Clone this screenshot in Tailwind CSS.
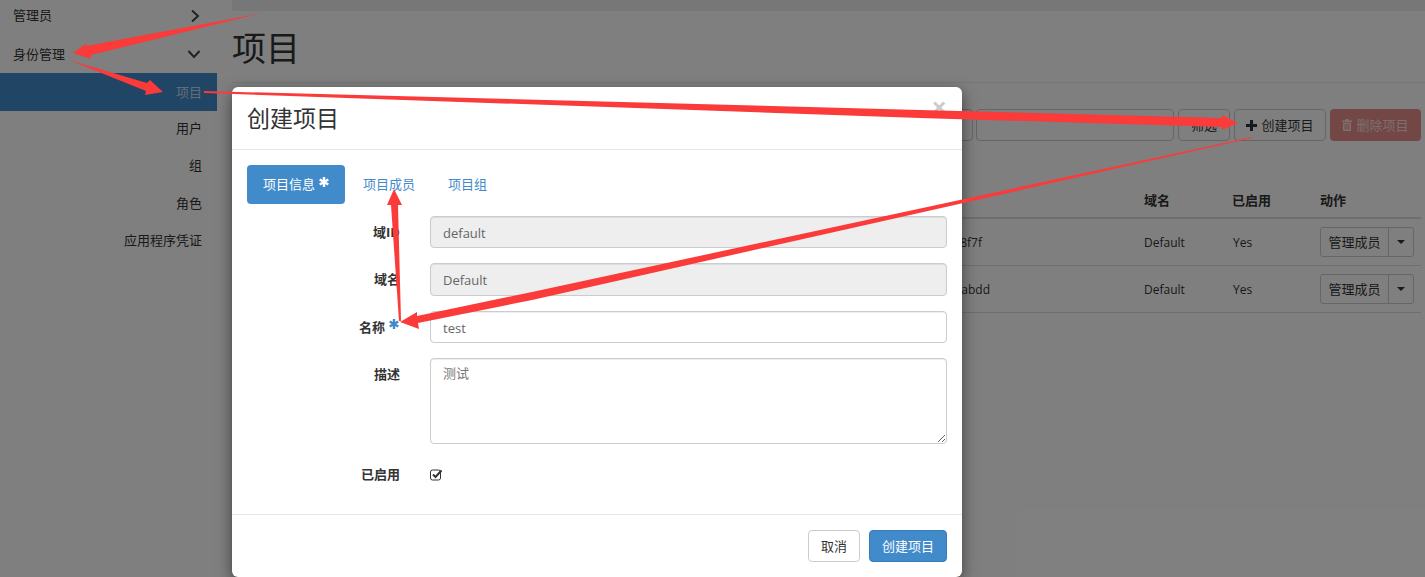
<!DOCTYPE html>
<html lang="zh">
<head>
<meta charset="utf-8">
<title>创建项目</title>
<script src="https://cdn.jsdelivr.net/npm/@tailwindcss/browser@4"></script>
</head>
<body class="m-0 overflow-hidden bg-white">
<div class="relative flex h-[577px] w-[1425px] overflow-hidden bg-white font-['Open_Sans','Noto_Sans_CJK_SC',sans-serif] text-[13px] leading-[18px] text-[#333]">

  <!-- sidebar -->
  <aside class="-mt-[4px] w-[217px] shrink-0">
    <div class="flex h-[39px] items-center justify-between pl-[13px] pr-[16px]"><span class="-mt-[2px]">管理员</span>
      <svg class="h-[14px] w-[12px]" viewBox="0 0 12 14" fill="none" stroke="#444" stroke-width="2"><path d="M3 1.5 9 7 3 12.5"/></svg></div>
    <div class="flex h-[38px] items-center justify-between pl-[13px] pr-[16px]"><span>身份管理</span>
      <svg class="h-[12px] w-[14px]" viewBox="0 0 14 12" fill="none" stroke="#444" stroke-width="2"><path d="M1.5 3 7 9 12.5 3"/></svg></div>
    <div class="flex h-[38px] items-center justify-end bg-[#428bca] pr-[15px] text-white/70">项目</div>
    <div class="flex h-[37px] items-center justify-end pb-[3px] pr-[15px]">用户</div>
    <div class="flex h-[37px] items-center justify-end pb-[3px] pr-[15px]">组</div>
    <div class="flex h-[37px] items-center justify-end pb-[2px] pr-[15px]">角色</div>
    <div class="flex h-[37px] items-center justify-end pb-[2px] pr-[15px]">应用程序凭证</div>
  </aside>

  <!-- main -->
  <main class="ml-[15px] flex-1">
    <div class="h-[11px] rounded-bl-[3px] bg-[#eeeeee]"></div>
    <h1 class="mt-[15px] h-[44px] text-[34px] font-normal leading-[44px] text-[#333]">项目</h1>
    <div class="mt-[12px] border-t border-[#eeeeee]"></div>
    <div class="mt-[26px] flex h-[32px] justify-end gap-[3px] pr-[4px]">
      <div class="h-[32px] w-[80px] rounded-[4px] border border-[#ccc]"></div>
      <div class="h-[32px] w-[198px] rounded-[4px] border border-[#ccc]"></div>
      <div class="ml-[1px] flex h-[32px] w-[52px] items-center justify-center rounded-[4px] border border-[#ccc]">筛选</div>
      <div class="ml-[1px] flex h-[32px] w-[92px] items-center justify-center gap-[4px] rounded-[4px] border border-[#ccc]">
        <svg class="h-[11px] w-[11px]" viewBox="0 0 11 11" fill="#333"><path d="M4 0h3v4h4v3H7v4H4V7H0V4h4z"/></svg>创建项目</div>
      <div class="ml-[1px] flex h-[32px] w-[91px] items-center justify-center gap-[4px] rounded-[4px] bg-[#e68f8d] text-white/70">
        <svg class="h-[12px] w-[10px]" viewBox="0 0 10 12" fill="#ffffff" fill-opacity=".7"><path d="M3.5 0h3l.5 1.5h3V3H0V1.500h3zM1 3.800h8V12H1zM2.600 5v5.500h1V5zm1.900 0v5.500h1V5zm1.900 0v5.500h1V5z" fill-rule="evenodd"/></svg>删除项目</div>
    </div>
    <div class="mr-[4px] mt-[50px] grid h-[28px] grid-cols-[912px_88px_88px_1fr] items-start border-b-2 border-[#ddd] font-bold">
      <span></span><span>域名</span><span>已启用</span><span>动作</span>
    </div>
    <div class="mr-[4px] grid h-[47px] grid-cols-[912px_88px_88px_1fr] items-center border-b border-[#ddd] text-[12px]">
      <span class="pr-[162px] pt-[2px] text-right">0c4e8f7f</span><span class="pt-[2px]">Default</span><span class="pl-[1px] pt-[2px]">Yes</span>
      <div class="flex h-[30px] w-[94px] rounded-[3px] border border-[#ccc] text-[13px]">
        <span class="flex w-[68px] items-center justify-center border-r border-[#ccc]">管理成员</span>
        <span class="flex flex-1 items-center justify-center"><span class="h-0 w-0 border-x-[4px] border-t-[4px] border-x-transparent border-t-[#333]"></span></span>
      </div>
    </div>
    <div class="mr-[4px] grid h-[47px] grid-cols-[912px_88px_88px_1fr] items-center border-b border-[#ddd] text-[12px]">
      <span class="pr-[154px] pt-[2px] text-right">7d2abdd</span><span class="pt-[2px]">Default</span><span class="pl-[1px] pt-[2px]">Yes</span>
      <div class="flex h-[30px] w-[94px] rounded-[3px] border border-[#ccc] text-[13px]">
        <span class="flex w-[68px] items-center justify-center border-r border-[#ccc]">管理成员</span>
        <span class="flex flex-1 items-center justify-center"><span class="h-0 w-0 border-x-[4px] border-t-[4px] border-x-transparent border-t-[#333]"></span></span>
      </div>
    </div>
  </main>

  <!-- backdrop -->
  <div class="absolute inset-0 bg-black/50"></div>

  <!-- modal -->
  <section class="absolute left-[232px] top-[87px] h-[490px] w-[730px] rounded-[6px] bg-white shadow-[0_5px_15px_rgba(0,0,0,0.5)]">
    <header class="relative h-[63px] border-b border-[#e5e5e5] pl-[15px] pt-[15px]">
      <h2 class="text-[23px] font-normal leading-[33px] text-[#333]">创建项目</h2>
      <span class="absolute right-[15px] top-[6px] text-[27px] font-bold leading-[27px] text-[#cccccc]">×</span>
    </header>
    <nav class="flex pl-[15px] pt-[15px]">
      <div class="flex h-[39px] w-[98px] items-center justify-center gap-[4px] rounded-[4px] bg-[#428bca] pb-[2px] text-white">项目信息
        <svg class="mb-[4px] h-[10px] w-[10px]" viewBox="0 0 10 10" stroke="#fff" stroke-width="2.400"><path d="M5 0v10M.7 2.500l8.600 5M.7 7.500l8.600-5"/></svg></div>
      <div class="ml-[18px] flex h-[39px] items-center pb-[2px] text-[#428bca]">项目成员</div>
      <div class="ml-[33px] flex h-[39px] items-center pb-[2px] text-[#428bca]">项目组</div>
    </nav>
    <form class="mt-[12px] flex flex-col pr-[15px]">
      <div class="flex h-[47px] items-start">
        <label class="mr-[30px] w-[168px] pt-[7px] text-right font-bold">域ID</label>
        <input class="h-[32px] flex-1 rounded-[4px] border border-[#ccc] bg-[#eeeeee] px-[12px] pt-[2px] text-[13px] text-[#666] shadow-[inset_0_1px_1px_rgba(0,0,0,0.075)]" value="default" readonly>
      </div>
      <div class="flex h-[48px] items-start">
        <label class="mr-[30px] w-[168px] pt-[7px] text-right font-bold">域名</label>
        <input class="h-[33px] flex-1 rounded-[4px] border border-[#ccc] bg-[#eeeeee] px-[12px] text-[13px] text-[#666] shadow-[inset_0_1px_1px_rgba(0,0,0,0.075)]" value="Default" readonly>
      </div>
      <div class="flex h-[47px] items-start">
        <label class="mr-[31px] flex w-[167px] justify-end gap-[4px] pt-[7px] font-bold">名称
          <svg class="mt-[1px] h-[10px] w-[10px]" viewBox="0 0 10 10" stroke="#428bca" stroke-width="2.400"><path d="M5 0v10M.7 2.500l8.600 5M.7 7.500l8.600-5"/></svg></label>
        <input class="h-[32px] flex-1 rounded-[4px] border border-[#ccc] bg-white px-[12px] pt-[2px] text-[13px] text-[#666] shadow-[inset_0_1px_1px_rgba(0,0,0,0.075)]" value="test">
      </div>
      <div class="flex h-[105px] items-start">
        <label class="mr-[30px] w-[168px] pt-[7px] text-right font-bold">描述</label>
        <textarea class="h-[86px] flex-1 rounded-[4px] border border-[#ccc] bg-white px-[12px] py-[5px] text-[13px] leading-[18px] text-[#777] shadow-[inset_0_1px_1px_rgba(0,0,0,0.075)]">测试</textarea>
      </div>
      <div class="flex h-[22px] items-center">
        <label class="mr-[30px] w-[168px] text-right font-bold">已启用</label>
        <svg class="h-[13px] w-[13px]" viewBox="0 0 13 13" fill="none" stroke="#333"><rect x=".5" y="2" width="10" height="10" rx="2"/><path d="M3 6.500 5.500 9 11.500 2.500" stroke-width="2"/></svg>
      </div>
    </form>
    <footer class="mt-[29px] flex h-[63px] items-start justify-end gap-[9px] border-t border-[#e5e5e5] pr-[15px] pt-[15px]">
      <div class="flex h-[32px] w-[52px] items-center justify-center rounded-[4px] border border-[#ccc] bg-white">取消</div>
      <div class="flex h-[32px] w-[78px] items-center justify-center rounded-[4px] border border-[#357ebd] bg-[#428bca] text-white">创建项目</div>
    </footer>
  </section>

  <!-- annotation arrows -->
  <svg class="pointer-events-none absolute left-0 top-0" width="1425" height="577" viewBox="0 0 1425 577" fill="#fb3a3a">
    <polygon points="262,13 86,46 87,43 73,53 91,59 91,55"/>
    <polygon points="69,60 147,83 150,80 163,92 145,95 146,91"/>
    <polygon points="204,91 204,93 920,118 1222,127 1222,130 1238,123 1222,115 1222,118 920,110"/>
    <polygon points="1252,137 532,292 417,316 417,312 400,322 419,329 418,323 532,300 1252,138"/>
    <polygon points="401,321 399,321 391,205 387,205 394,189 402,205 398,205"/>
  </svg>
</div>
</body>
</html>
